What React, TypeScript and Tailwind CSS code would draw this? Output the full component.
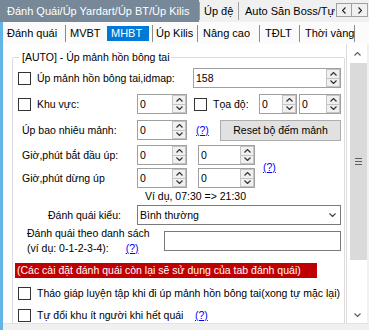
import type { ReactNode } from 'react';

function Chevron({ up, className }: { up?: boolean; className?: string }) {
  return (
    <svg width="7" height="4" viewBox="0 0 7 4" className={className}>
      <path
        d={up ? 'M0.5 3.5 L3.5 0.5 L6.5 3.5' : 'M0.5 0.5 L3.5 3.5 L6.5 0.5'}
        fill="none"
        stroke="currentColor"
        strokeWidth="1.2"
      />
    </svg>
  );
}

function Spin({ value, width }: { value: string; width: string }) {
  return (
    <div className={`flex h-[20px] shrink-0 border border-[#a0a0a0] bg-white ${width}`}>
      <div className="flex-1 pl-[2px] leading-[18px]">{value}</div>
      <div className="flex w-[14px] flex-col">
        <div className="flex flex-1 items-center justify-center border border-[#c4c4c4] bg-[#f0f0f0] text-[#333]">
          <Chevron up />
        </div>
        <div className="flex flex-1 items-center justify-center border border-t-0 border-[#c4c4c4] bg-[#f0f0f0] text-[#333]">
          <Chevron />
        </div>
      </div>
    </div>
  );
}

function Check({ className = '' }: { className?: string }) {
  return <span className={`block h-[13px] w-[13px] shrink-0 border border-[#333] bg-white ${className}`} />;
}

function Help({ className = '' }: { className?: string }) {
  return <span className={`text-[#0000ff] underline ${className}`}>(?)</span>;
}

function Row({ children, className = '' }: { children: ReactNode; className?: string }) {
  return <div className={`flex h-[20px] items-center whitespace-nowrap ${className}`}>{children}</div>;
}

export default function App() {
  const subTabs = [
    { label: 'Đánh quái', w: 'w-[63px]', pl: 'pl-[4px]', sep: true },
    { label: 'MVBT', w: 'w-[39px]', pl: 'pl-[4px]', sep: false },
    { label: 'MHBT', w: 'w-[48px]', pl: 'pl-[2px]', sep: true, active: true },
    { label: 'Úp Kilis', w: 'w-[45px]', pl: 'pl-[3px]', sep: true },
    { label: 'Nâng cao', w: 'w-[62px]', pl: 'pl-[5px]', sep: true },
    { label: 'TĐLT', w: 'w-[40px]', pl: 'pl-[5px]', sep: true },
    { label: 'Thời vàng', w: 'w-[55px]', pl: 'pl-[5px]', sep: true },
  ];

  return (
    <div className="flex h-[330px] w-[369px] flex-col overflow-hidden bg-[#f0f0f0] font-['Liberation_Sans',Arial,sans-serif] text-[10.5px] leading-[13px] text-black">
      {/* top tab strip */}
      <div className="flex h-[22px] shrink-0 items-stretch text-[11px]">
        <div className="flex w-[199px] items-center whitespace-nowrap bg-[#778899] pl-[7px] text-white">
          Đánh Quái/Úp Yardart/Úp BT/Úp Kilis
        </div>
        <div className="my-[2px] flex w-[40px] items-center border-x border-[#a0a0a0] pl-[4px] whitespace-nowrap">Úp đệ</div>
        <div className="my-[2px] flex w-[97px] items-center overflow-hidden whitespace-nowrap pl-[6px]">
          Auto Săn Boss/Tự động
        </div>
        <div className="flex items-start pt-[3px]">
          <div className="flex h-[14px] w-[16px] items-center justify-center border border-[#a0a0a0] bg-[#f0f0f0] text-[#222]">
            <svg width="4" height="7" viewBox="0 0 4 7"><path d="M3.5 0.5 L0.5 3.5 L3.5 6.5" fill="none" stroke="currentColor" strokeWidth="1.2" /></svg>
          </div>
          <div className="flex h-[14px] w-[16px] items-center justify-center border border-l-0 border-[#a0a0a0] bg-[#f0f0f0] text-[#222]">
            <svg width="4" height="7" viewBox="0 0 4 7"><path d="M0.5 0.5 L3.5 3.5 L0.5 6.5" fill="none" stroke="currentColor" strokeWidth="1.2" /></svg>
          </div>
        </div>
      </div>

      <div className="flex flex-1">
        <div className="w-[3px] shrink-0 bg-[#62b6e7]" />
        <div className="flex flex-1 flex-col">
          {/* sub tabs */}
          <div className="flex h-[22px] shrink-0 items-center bg-[#fbfbfb] text-[11px]">
            {subTabs.map((t) => (
              <div
                key={t.label}
                className={`flex h-[17px] items-center whitespace-nowrap ${t.w} ${t.pl} ${t.sep ? 'border-r border-[#8c8c8c]' : ''}`}
              >
                {t.active ? (
                  <span className="flex h-[15px] w-[42px] items-center bg-[#0078d7] pl-[4px] text-white">{t.label}</span>
                ) : (
                  t.label
                )}
              </div>
            ))}
          </div>

          {/* page */}
          <div className="flex h-[279px] shrink-0">
            <div className="w-[343px] overflow-hidden bg-white">
              <div className="relative ml-[9px] mt-[13px] h-[300px] w-[333px] rounded-[2px] border border-[#dcdcdc]">
                <span className="absolute -top-[7px] left-[6px] whitespace-nowrap bg-white pl-[3px] pr-[2px]">
                  [AUTO] - Úp mảnh hồn bông tai
                </span>

                <Row className="mt-[10px] pl-[5px]">
                  <Check />
                  <span className="ml-[6px] w-[156px]">Úp mảnh hồn bông tai,idmap:</span>
                  <Spin value="158" width="w-[148px]" />
                </Row>

                <Row className="mt-[6px] pl-[5px]">
                  <Check />
                  <span className="ml-[6px] w-[100px]">Khu vực:</span>
                  <Spin value="0" width="w-[50px]" />
                  <Check className="ml-[7px]" />
                  <span className="ml-[6px] w-[46px]">Tọa độ:</span>
                  <Spin value="0" width="w-[38px]" />
                  <span className="ml-[2px]" />
                  <Spin value="0" width="w-[42px]" />
                </Row>

                <Row className="mt-[6px] pl-[9px]">
                  <span className="w-[115px]">Úp bao nhiêu mảnh:</span>
                  <Spin value="0" width="w-[50px]" />
                  <Help className="ml-[9px] w-[24px]" />
                  <div className="flex h-[21px] w-[121px] items-center justify-center border border-[#adadad] bg-[#e1e1e1]">
                    Reset bộ đếm mảnh
                  </div>
                </Row>

                <div className="mt-[5px] flex items-center pl-[9px]">
                  <div className="flex flex-col gap-[3px]">
                    <Row>
                      <span className="w-[115px]">Giờ,phút bắt đầu úp:</span>
                      <Spin value="0" width="w-[50px]" />
                      <span className="ml-[11px]" />
                      <Spin value="0" width="w-[57px]" />
                    </Row>
                    <Row>
                      <span className="w-[115px]">Giờ,phút dừng úp</span>
                      <Spin value="0" width="w-[50px]" />
                      <span className="ml-[11px]" />
                      <Spin value="0" width="w-[57px]" />
                    </Row>
                  </div>
                  <Help className="ml-[8px] mt-[2px]" />
                </div>

                <div className="mt-[2px] pl-[132px]">Ví dụ, 07:30 =&gt; 21:30</div>

                <Row className="mt-[2px]">
                  <span className="w-[124px] pl-[35px]">Đánh quái kiểu:</span>
                  <div className="flex h-[20px] w-[204px] items-center justify-between border border-[#7a7a7a] bg-white pl-[2px] pr-[4px]">
                    <span>Bình thường</span>
                    <Chevron className="text-[#444]" />
                  </div>
                </Row>

                <div className="mt-[1px] flex h-[30px] items-center">
                  <div className="flex w-[151px] flex-col whitespace-nowrap pl-[14px] leading-[15px]">
                    <span>Đánh quái theo danh sách</span>
                    <span>
                      (ví dụ: 0-1-2-3-4):<Help className="ml-[17px]" />
                    </span>
                  </div>
                  <div className="h-[20px] w-[177px] border border-[#7a7a7a] bg-white" />
                </div>

                <div className="ml-[2px] mt-[7px] flex h-[15px] w-[302px] items-center whitespace-nowrap bg-[#c00000] pl-[2px] text-white">
                  (Các cài đặt đánh quái còn lại sẽ sử dụng của tab đánh quái)
                </div>

                <Row className="mt-[5px] pl-[5px]">
                  <Check />
                  <span className="ml-[6px]">Tháo giáp luyện tập khi đi úp mảnh hồn bông tai(xong tự mặc lại)</span>
                </Row>

                <Row className="mt-[2px] pl-[5px]">
                  <Check />
                  <span className="ml-[6px] w-[158px]">Tự đổi khu ít người khi hết quái</span>
                  <Help />
                </Row>
              </div>
            </div>

            {/* scrollbar */}
            <div className="flex w-[21px] flex-col border-l border-[#dcdcdc] bg-white">
              <div className="flex h-[19px] items-center justify-center text-[#606060]">
                <Chevron up />
              </div>
              <div className="ml-[3px] flex h-[197px] items-center justify-center bg-[#dadada]">
                <div className="flex flex-col gap-[2px]">
                  <span className="h-[1px] w-[7px] bg-[#606060]" />
                  <span className="h-[1px] w-[7px] bg-[#606060]" />
                  <span className="h-[1px] w-[7px] bg-[#606060]" />
                </div>
              </div>
              <div className="flex-1" />
              <div className="flex h-[16px] items-center justify-center text-[#606060]">
                <Chevron />
              </div>
            </div>
            <div className="w-[2px] bg-[#f0f0f0]" />
          </div>
          <div className="flex-1 border-t border-[#e3e3e3] bg-[#f0f0f0]" />
        </div>
      </div>
    </div>
  );
}
